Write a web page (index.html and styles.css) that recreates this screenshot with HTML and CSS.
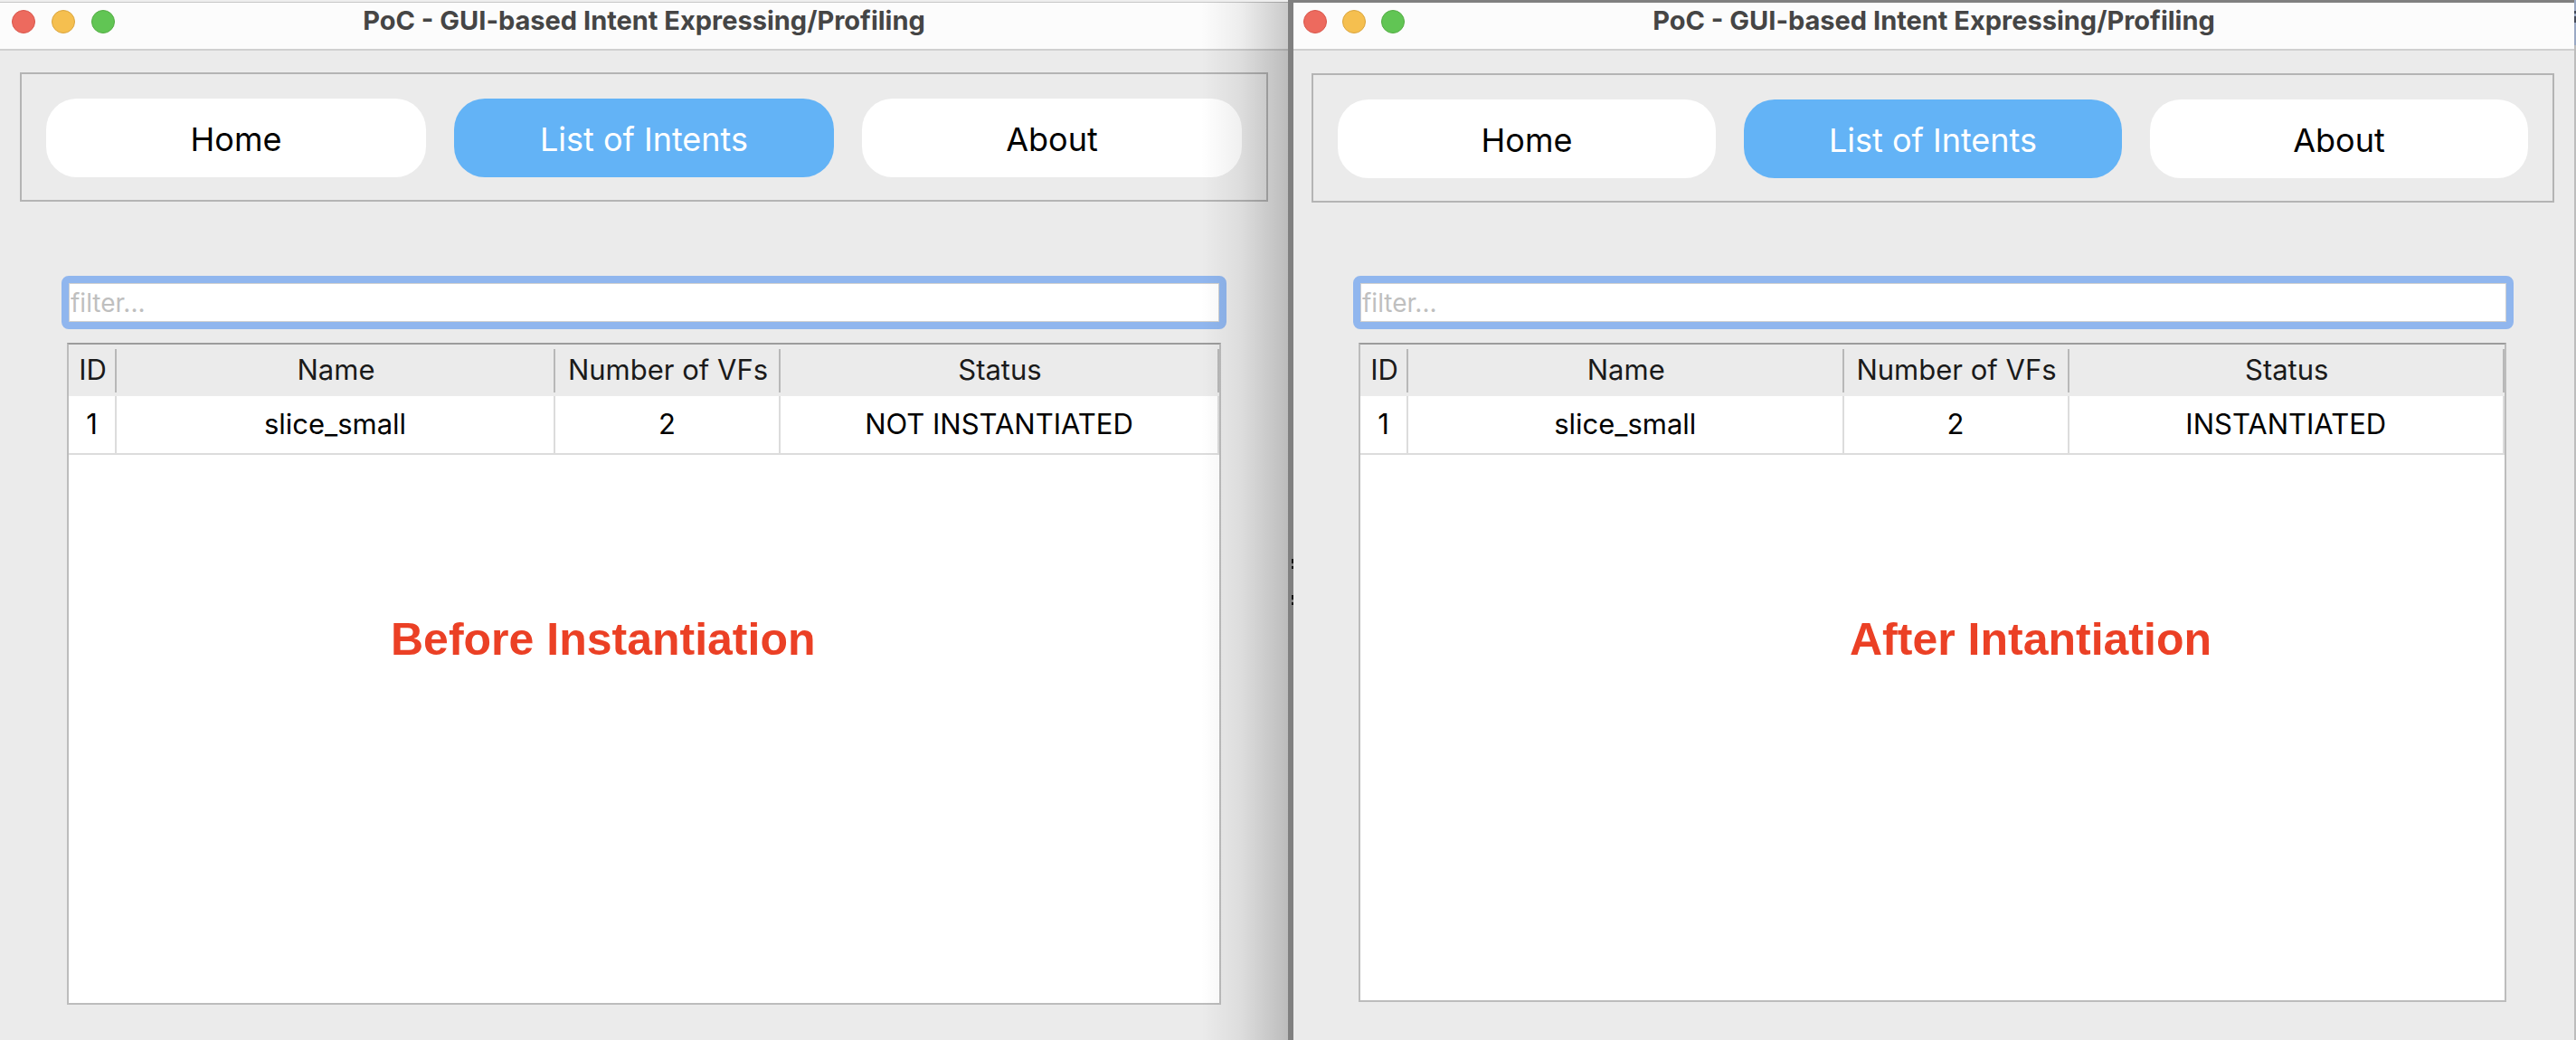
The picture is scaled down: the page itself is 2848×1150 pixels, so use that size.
FILE: index.html
```html
<!DOCTYPE html>
<html lang="en">
<head>
<meta charset="utf-8">
<title>PoC - GUI-based Intent Expressing/Profiling</title>
<link rel="stylesheet" href="styles.css">
</head>
<body>
<main class="comparison">
  <section class="window window-back">
    <header class="titlebar">
      <div class="lights">
        <button class="light close" aria-label="Close"></button>
        <button class="light minimize" aria-label="Minimize"></button>
        <button class="light zoom" aria-label="Zoom"></button>
      </div>
      <h1 class="title">PoC - GUI-based Intent Expressing/Profiling</h1>
    </header>
    <nav class="tabs">
      <button class="tab">Home</button>
      <button class="tab tab-active">List of Intents</button>
      <button class="tab">About</button>
    </nav>
    <div class="content">
      <input class="filter" type="text" placeholder="filter..." aria-label="Filter intents">
      <div class="panel">
        <table class="intents">
          <colgroup><col class="col-id"><col><col class="col-vfs"><col></colgroup>
          <thead><tr><th>ID</th><th>Name</th><th>Number of VFs</th><th>Status</th></tr></thead>
          <tbody><tr><td>1</td><td>slice_small</td><td>2</td><td>NOT INSTANTIATED</td></tr></tbody>
        </table>
        <p class="note">Before Instantiation</p>
      </div>
    </div>
  </section>
  <section class="window window-front">
    <header class="titlebar">
      <div class="lights">
        <button class="light close" aria-label="Close"></button>
        <button class="light minimize" aria-label="Minimize"></button>
        <button class="light zoom" aria-label="Zoom"></button>
      </div>
      <h1 class="title">PoC - GUI-based Intent Expressing/Profiling</h1>
    </header>
    <nav class="tabs">
      <button class="tab">Home</button>
      <button class="tab tab-active">List of Intents</button>
      <button class="tab">About</button>
    </nav>
    <div class="content">
      <input class="filter" type="text" placeholder="filter..." aria-label="Filter intents">
      <div class="panel">
        <table class="intents">
          <colgroup><col class="col-id"><col><col class="col-vfs"><col></colgroup>
          <thead><tr><th>ID</th><th>Name</th><th>Number of VFs</th><th>Status</th></tr></thead>
          <tbody><tr><td>1</td><td>slice_small</td><td>2</td><td>INSTANTIATED</td></tr></tbody>
        </table>
        <p class="note">After Intantiation</p>
      </div>
    </div>
  </section>
</main>
</body>
</html>
```
FILE: styles.css
```css
* {
  box-sizing: border-box;
}

body {
  margin: 0;
  background: #ebebeb;
  color: #000;
  font-family: Inter, "Liberation Sans", sans-serif;
}

.comparison {
  display: grid;
  grid-template-columns: 1fr 1fr;
  min-height: 100vh;
}

.window {
  position: relative;
  display: flex;
  flex-direction: column;
  background: #ebebeb;
}

.window-back {
  border-top: 2px solid #eee;
}

/* Shadow that the front window casts on the one behind it */
.window-back::after {
  content: "";
  position: absolute;
  top: 0;
  right: 0;
  bottom: 0;
  width: 96px;
  background: linear-gradient(to right, transparent, rgb(0 0 0 / 6%) 45%, rgb(0 0 0 / 20%));
  pointer-events: none;
}

.window-front {
  border: solid #808080;
  border-width: 3px 2px 0 6px;
  border-right-color: #bdbdbd;
}

/* Slivers of the desktop that show at the edges of the front window */
.window-front::before,
.window-front::after {
  content: "";
  position: absolute;
  width: 2px;
}

.window-front::before {
  top: 615px;
  left: -2px;
  height: 51px;
  background: linear-gradient(#111 5px, transparent 5px 8px, #111 8px 11px, transparent 11px 40px, #111 40px 45px, transparent 45px 48px, #111 48px);
}

.window-front::after {
  top: -3px;
  right: -2px;
  height: 50px;
  background: linear-gradient(#9aa9c4 12px, #444a58 12px 15px, #9aa9c4 15px 18px, #444a58 18px 25px, #9aa9c4 25px);
}

.titlebar {
  position: relative;
  display: flex;
  align-items: center;
  justify-content: center;
  height: 53px;
  padding-bottom: 12px;
  border-bottom: 2px solid #d0d0d0;
  background: #fcfcfc;
}

.window-back .titlebar {
  height: 54px;
  border-top: 1px solid #c8c8c8;
}

.lights {
  position: absolute;
  top: 8px;
  left: 13px;
  display: flex;
  gap: 18px;
}

.light {
  width: 26px;
  height: 26px;
  padding: 0;
  border: 1px solid #d9564b;
  border-radius: 50%;
  background: #ed6a5e;
}

.minimize {
  border-color: #dba53d;
  background: #f5bf4f;
}

.zoom {
  border-color: #53ad43;
  background: #61c554;
}

.window-front .lights {
  left: 11px;
  gap: 17px;
}

.title {
  margin: 0;
  color: #454545;
  font-size: 29px;
  font-weight: 700;
  line-height: 36px;
}

.tabs {
  display: grid;
  grid-template-columns: repeat(3, 1fr);
  gap: 31px;
  margin: 24px 22px 0;
  padding: 27px 27px 25px;
  border: 2px solid #b4b4b4;
}

.window-front .tabs {
  margin: 25px 22px 0 20px;
}

.tab {
  height: 87px;
  padding: 2px 0 0;
  border: 0;
  border-radius: 34px;
  background: #fff;
  color: #000;
  font-family: inherit;
  font-size: 36px;
}

.tab-active {
  background: #63b3f6;
  color: #fff;
}

.content {
  display: flex;
  flex: 1;
  flex-direction: column;
  gap: 15px;
  padding: 82px 68px 39px;
}

.window-front .content {
  padding: 81px 67px 42px 66px;
}

.filter {
  height: 59px;
  padding: 0 2px;
  border: 8px solid #90b6ee;
  border-radius: 8px;
  outline: 0;
  background: #fff;
  box-shadow: inset 0 0 0 1px #d0d0d0;
  font-family: inherit;
  font-size: 28px;
}

.filter::placeholder {
  color: #bfbfbf;
  opacity: 1;
}

.panel {
  flex: 1;
  margin: 0 6px;
  border: 2px solid #bcbcbc;
  border-top-color: #9c9c9c;
  background: #fff;
}

.window-front .panel {
  margin-right: 8px;
}

.intents {
  width: 100%;
  border-collapse: separate;
  border-spacing: 0;
  table-layout: fixed;
  font-size: 31px;
}

.col-id {
  width: 53px;
}

.col-vfs {
  width: 249px;
}

th,
td {
  padding: 0 0 3px;
  text-align: center;
  white-space: nowrap;
}

th {
  height: 57px;
  background: linear-gradient(#b8b8b8, #b8b8b8) right center / 2px 48px no-repeat #ebebeb;
  color: #1a1a1a;
  font-weight: 400;
}

td {
  height: 65px;
  border: solid #dcdcdc;
  border-width: 0 2px 2px 0;
}

.note {
  margin: 174px 0 0;
  padding-left: 356px;
  color: #eb4025;
  font-family: "Liberation Sans", sans-serif;
  font-size: 50px;
  font-weight: 700;
  line-height: 60px;
}

.window-front .note {
  padding-left: 541px;
}
```
